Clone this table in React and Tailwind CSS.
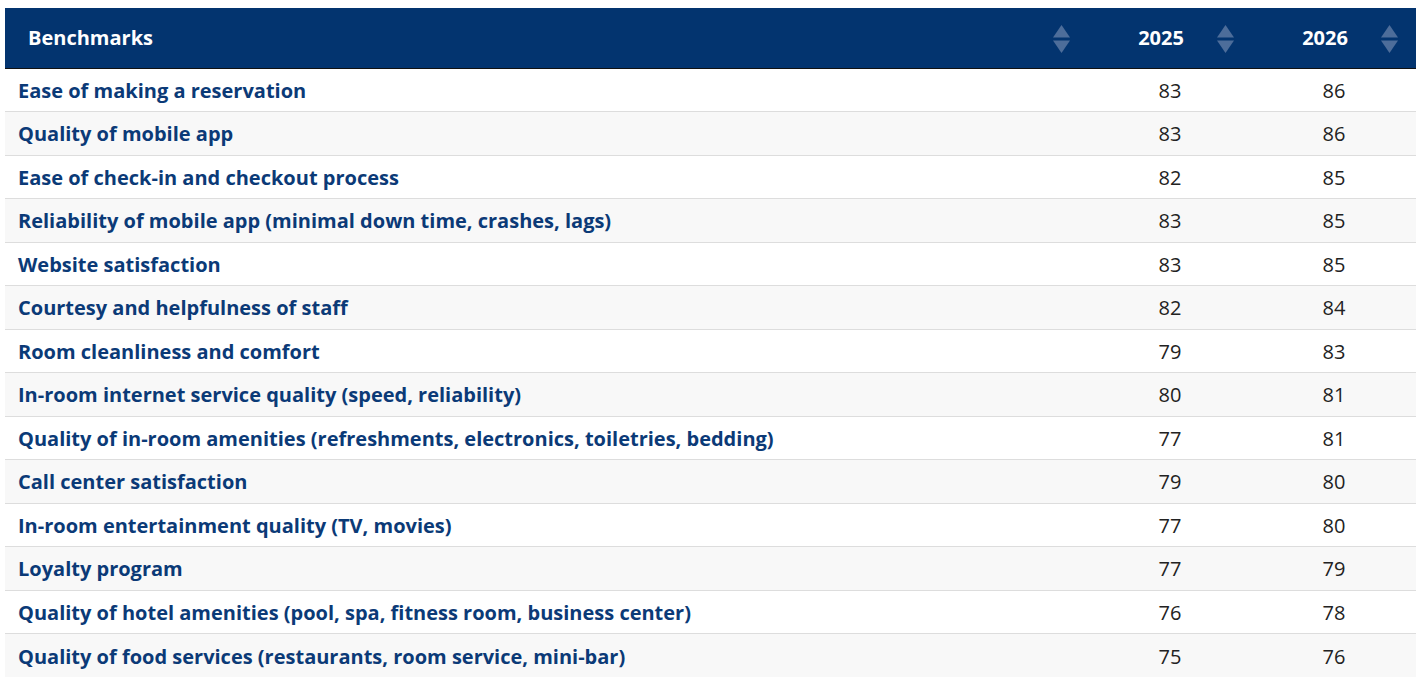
import React from "react";

const rows = [
  ["Ease of making a reservation", 83, 86],
  ["Quality of mobile app", 83, 86],
  ["Ease of check-in and checkout process", 82, 85],
  ["Reliability of mobile app (minimal down time, crashes, lags)", 83, 85],
  ["Website satisfaction", 83, 85],
  ["Courtesy and helpfulness of staff", 82, 84],
  ["Room cleanliness and comfort", 79, 83],
  ["In-room internet service quality (speed, reliability)", 80, 81],
  ["Quality of in-room amenities (refreshments, electronics, toiletries, bedding)", 77, 81],
  ["Call center satisfaction", 79, 80],
  ["In-room entertainment quality (TV, movies)", 77, 80],
  ["Loyalty program", 77, 79],
  ["Quality of hotel amenities (pool, spa, fitness room, business center)", 76, 78],
  ["Quality of food services (restaurants, room service, mini-bar)", 75, 76],
];

// up/down sort arrows in the header cells
const SortIcon = () => (
  <svg width="17" height="28" viewBox="0 0 17 28" className="absolute right-[18px] top-[17px]">
    <path d="M8.5 0 L17 12.5 L0 12.5 Z" fill="#4d6d9a" />
    <path d="M8.5 28 L17 15.5 L0 15.5 Z" fill="#4d6d9a" />
  </svg>
);

export default function App() {
  return (
    <div className="bg-white min-h-screen pt-[8px] px-[5px]" style={{ fontFamily: "'Open Sans', sans-serif" }}>
      <table className="w-full border-collapse text-[20px]">
        <thead>
          <tr className="bg-[#03346f] text-white h-[60px] border-b border-[#111]">
            <th className="relative text-left font-bold pl-[23px] pr-[40px]">
              Benchmarks
              <SortIcon />
            </th>
            <th className="relative w-[164px] text-center font-bold pr-[18px]">
              2025
              <SortIcon />
            </th>
            <th className="relative w-[164px] text-center font-bold pr-[18px]">
              2026
              <SortIcon />
            </th>
          </tr>
        </thead>
        <tbody>
          {rows.map(([label, a, b], i) => (
            <tr
              key={label}
              className={`h-[43.5px] border-b border-[#dddddd] last:border-b-0 ${i % 2 === 1 ? "bg-[#f8f8f8]" : "bg-white"}`}
            >
              <td className="pl-[13px] pt-[2px] font-bold text-[#0b3a77]">{label}</td>
              <td className="text-center pt-[2px] text-[#222]">{a}</td>
              <td className="text-center pt-[2px] text-[#222]">{b}</td>
            </tr>
          ))}
        </tbody>
      </table>
    </div>
  );
}
